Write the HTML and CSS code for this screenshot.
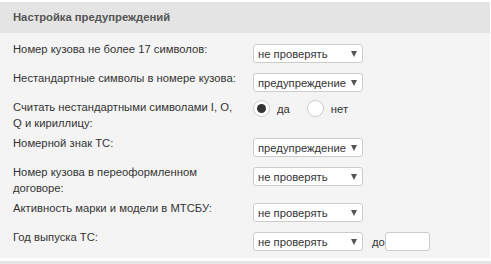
FILE: index.html
```html
<!DOCTYPE html>
<html lang="ru">
<head>
    <meta charset="UTF-8">
    <title>Настройка предупреждений</title>
    <link rel="stylesheet" href="styles.css">
</head>
<body>
    <div class="panel">
        <div class="panel-head">Настройка предупреждений</div>
        <div class="panel-body">
            <div class="row">
                <div class="row-label">Номер кузова не более 17 символов:</div>
                <div class="row-control">
                    <div class="select-wrap">
                        <select class="select">
                            <option>не проверять</option>
                            <option>предупреждение</option>
                        </select>
                    </div>
                </div>
            </div>
            <div class="row">
                <div class="row-label">Нестандартные символы в номере кузова:</div>
                <div class="row-control">
                    <div class="select-wrap">
                        <select class="select">
                            <option>предупреждение</option>
                            <option>не проверять</option>
                        </select>
                    </div>
                </div>
            </div>
            <div class="row">
                <div class="row-label">Считать нестандартными символами I, O, Q и кириллицу:</div>
                <div class="row-control radios">
                    <label class="radio-item">
                        <input type="radio" name="cyr" class="radio" checked> да
                    </label>
                    <label class="radio-item">
                        <input type="radio" name="cyr" class="radio"> нет
                    </label>
                </div>
            </div>
            <div class="row">
                <div class="row-label">Номерной знак ТС:</div>
                <div class="row-control">
                    <div class="select-wrap">
                        <select class="select">
                            <option>предупреждение</option>
                            <option>не проверять</option>
                        </select>
                    </div>
                </div>
            </div>
            <div class="row">
                <div class="row-label">Номер кузова в переоформленном договоре:</div>
                <div class="row-control">
                    <div class="select-wrap">
                        <select class="select">
                            <option>не проверять</option>
                            <option>предупреждение</option>
                        </select>
                    </div>
                </div>
            </div>
            <div class="row">
                <div class="row-label">Активность марки и модели в МТСБУ:</div>
                <div class="row-control">
                    <div class="select-wrap">
                        <select class="select">
                            <option>не проверять</option>
                            <option>предупреждение</option>
                        </select>
                    </div>
                </div>
            </div>
            <div class="row">
                <div class="row-label">Год выпуска ТС:</div>
                <div class="row-control">
                    <div class="select-wrap">
                        <select class="select">
                            <option>не проверять</option>
                            <option>предупреждение</option>
                        </select>
                    </div>
                    <span class="until">до</span>
                    <input type="text" class="year-input">
                </div>
            </div>
        </div>
    </div>
    <div class="panel-next"></div>
</body>
</html>
```

FILE: styles.css
```css
body {
    margin: 0;
    background-color: #ffffff;
    font-family: 'Liberation Sans', Arial, sans-serif;
    font-size: 11.25px;
    color: #333333;
}
.panel {
    margin: 2px 1px 0 0;
}
.panel-head {
    height: 31px;
    line-height: 31px;
    padding-left: 13px;
    background-color: #e4e4e4;
    font-weight: bold;
    color: #555555;
}
.panel-body {
    background-color: #f4f4f4;
    padding: 6px 0 2px 0;
}
.row {
    display: flex;
    align-items: flex-start;
    padding: 2px 0 2px 13px;
}
.row-label {
    width: 228px;
    margin-right: 12px;
    line-height: 16px;
}
.row-control {
    display: flex;
    align-items: center;
    margin: 3px 0;
}

/* Select with drawn arrow */
.select-wrap {
    position: relative;
    width: 110px;
    height: 19px;
}
.select {
    appearance: none;
    -webkit-appearance: none;
    width: 110px;
    height: 19px;
    margin: 0;
    padding: 0 12px 0 4px;
    border: 1px solid #cccccc;
    border-radius: 3px;
    background-color: #ffffff;
    font-family: inherit;
    font-size: 11.25px;
    color: #333333;
    outline: none;
}
.select-wrap::after {
    content: '';
    position: absolute;
    right: 6px;
    top: 7px;
    border-left: 3px solid transparent;
    border-right: 3px solid transparent;
    border-top: 6px solid #555555;
    pointer-events: none;
}

/* Radios */
.radios {
    margin-top: 1px;
}
.radio-item {
    display: flex;
    align-items: center;
    margin-right: 17px;
}
.radio {
    appearance: none;
    -webkit-appearance: none;
    width: 17px;
    height: 17px;
    margin: 0 7px 0 0;
    border: 1px solid #cccccc;
    border-radius: 50%;
    background-color: #ffffff;
    box-sizing: border-box;
    position: relative;
}
.radio:checked::after {
    content: '';
    position: absolute;
    left: 3px;
    top: 3px;
    width: 9px;
    height: 9px;
    border-radius: 50%;
    background-color: #333333;
}

.until {
    margin: 0 0 0 9px;
}
.year-input {
    width: 45px;
    height: 19px;
    margin: 0;
    padding: 0 3px;
    border: 1px solid #cccccc;
    border-radius: 3px;
    background-color: #ffffff;
    box-sizing: border-box;
    outline: none;
}

.panel-next {
    margin-top: 3px;
    height: 10px;
    background-color: #e5e5e5;
}
```
